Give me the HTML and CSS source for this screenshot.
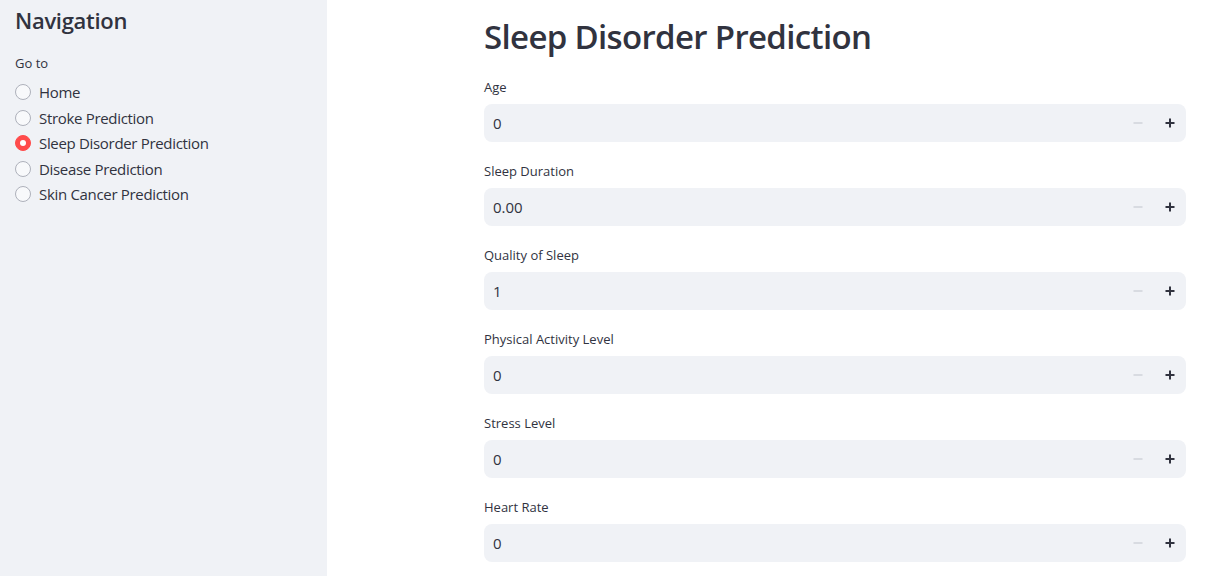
FILE: index.html
```html
<!DOCTYPE html>
<html lang="en">
<head>
<meta charset="utf-8">
<title>Sleep Disorder Prediction</title>
<link rel="stylesheet" href="styles.css">
</head>
<body>
<div class="app">
  <aside class="sidebar">
    <h2 class="side-title">Navigation</h2>
    <div class="radio-label">Go to</div>
    <ul class="radio-list">
      <li class="radio"><span class="dot"></span><span>Home</span></li>
      <li class="radio"><span class="dot"></span><span>Stroke Prediction</span></li>
      <li class="radio checked"><span class="dot"></span><span>Sleep Disorder Prediction</span></li>
      <li class="radio"><span class="dot"></span><span>Disease Prediction</span></li>
      <li class="radio"><span class="dot"></span><span>Skin Cancer Prediction</span></li>
    </ul>
  </aside>
  <main class="main">
    <div class="content">
      <h1 class="title">Sleep Disorder Prediction</h1>
      <div class="field">
        <label class="field-label">Age</label>
        <div class="num"><span class="num-value">0</span><span class="step minus"><svg width="10" height="10" viewBox="0 0 10 10"><rect x="0.5" y="4.2" width="9" height="1.6" fill="currentColor"/></svg></span><span class="step plus"><svg width="10" height="10" viewBox="0 0 10 10"><rect x="0.5" y="4" width="9" height="2" fill="currentColor"/><rect x="4" y="0.5" width="2" height="9" fill="currentColor"/></svg></span></div>
      </div>
      <div class="field">
        <label class="field-label">Sleep Duration</label>
        <div class="num"><span class="num-value">0.00</span><span class="step minus"><svg width="10" height="10" viewBox="0 0 10 10"><rect x="0.5" y="4.2" width="9" height="1.6" fill="currentColor"/></svg></span><span class="step plus"><svg width="10" height="10" viewBox="0 0 10 10"><rect x="0.5" y="4" width="9" height="2" fill="currentColor"/><rect x="4" y="0.5" width="2" height="9" fill="currentColor"/></svg></span></div>
      </div>
      <div class="field">
        <label class="field-label">Quality of Sleep</label>
        <div class="num"><span class="num-value">1</span><span class="step minus"><svg width="10" height="10" viewBox="0 0 10 10"><rect x="0.5" y="4.2" width="9" height="1.6" fill="currentColor"/></svg></span><span class="step plus"><svg width="10" height="10" viewBox="0 0 10 10"><rect x="0.5" y="4" width="9" height="2" fill="currentColor"/><rect x="4" y="0.5" width="2" height="9" fill="currentColor"/></svg></span></div>
      </div>
      <div class="field">
        <label class="field-label">Physical Activity Level</label>
        <div class="num"><span class="num-value">0</span><span class="step minus"><svg width="10" height="10" viewBox="0 0 10 10"><rect x="0.5" y="4.2" width="9" height="1.6" fill="currentColor"/></svg></span><span class="step plus"><svg width="10" height="10" viewBox="0 0 10 10"><rect x="0.5" y="4" width="9" height="2" fill="currentColor"/><rect x="4" y="0.5" width="2" height="9" fill="currentColor"/></svg></span></div>
      </div>
      <div class="field">
        <label class="field-label">Stress Level</label>
        <div class="num"><span class="num-value">0</span><span class="step minus"><svg width="10" height="10" viewBox="0 0 10 10"><rect x="0.5" y="4.2" width="9" height="1.6" fill="currentColor"/></svg></span><span class="step plus"><svg width="10" height="10" viewBox="0 0 10 10"><rect x="0.5" y="4" width="9" height="2" fill="currentColor"/><rect x="4" y="0.5" width="2" height="9" fill="currentColor"/></svg></span></div>
      </div>
      <div class="field">
        <label class="field-label">Heart Rate</label>
        <div class="num"><span class="num-value">0</span><span class="step minus"><svg width="10" height="10" viewBox="0 0 10 10"><rect x="0.5" y="4.2" width="9" height="1.6" fill="currentColor"/></svg></span><span class="step plus"><svg width="10" height="10" viewBox="0 0 10 10"><rect x="0.5" y="4" width="9" height="2" fill="currentColor"/><rect x="4" y="0.5" width="2" height="9" fill="currentColor"/></svg></span></div>
      </div>
    </div>
  </main>
</div>
</body>
</html>
```

FILE: styles.css
```css
* { box-sizing: border-box; }
html, body { margin: 0; padding: 0; }
body {
  font-family: "Open Sans", "Noto Sans", "Liberation Sans", sans-serif;
  color: #31333f;
  background: #ffffff;
  width: 1218px;
  height: 576px;
  overflow: hidden;
}
.app {
  display: flex;
  height: 576px;
}
.sidebar {
  width: 327px;
  flex: 0 0 327px;
  background: #f0f2f6;
  padding: 7px 15px 0 15px;
}
.side-title {
  margin: 0;
  font-size: 22px;
  line-height: 1.2;
  font-weight: 600;
  letter-spacing: -0.3px;
}
.radio-label {
  margin-top: 20px;
  font-size: 13px;
  line-height: 20px;
}
.radio-list {
  list-style: none;
  margin: 6px 0 0 0;
  padding: 0;
}
.radio {
  display: flex;
  align-items: center;
  height: 25.5px;
  font-size: 15px;
  letter-spacing: -0.32px;
}
.dot {
  width: 16px;
  height: 16px;
  border-radius: 50%;
  border: 1px solid #aeb1bb;
  background: #f8f9fb;
  margin-right: 8px;
  flex: 0 0 16px;
  display: flex;
  align-items: center;
  justify-content: center;
}
.radio.checked .dot {
  background: #ff4b4b;
  border-color: #ff4b4b;
}
.radio.checked .dot::after {
  content: "";
  width: 6px;
  height: 6px;
  border-radius: 50%;
  background: #ffffff;
}
.main {
  flex: 1;
  padding: 17px 32px 0 157px;
}
.content {
  width: 702px;
  display: flex;
  flex-direction: column;
  gap: 19px;
}
.title {
  margin: 0 0 1px 0;
  font-size: 33px;
  line-height: 1.2;
  font-weight: 600;
  letter-spacing: -0.66px;
}
.field {
  display: flex;
  flex-direction: column;
  gap: 7px;
}
.field-label {
  font-size: 13px;
  line-height: 20px;
}
.num {
  display: flex;
  align-items: center;
  height: 38px;
  background: #f0f2f6;
  border-radius: 8px;
}
.num-value {
  flex: 1;
  padding-left: 9px;
  font-size: 15px;
}
.step {
  width: 32px;
  height: 38px;
  display: flex;
  align-items: center;
  justify-content: center;
}
.step svg { display: block; }
.minus { color: #d3d5db; }
.plus { color: #31333f; }
```
